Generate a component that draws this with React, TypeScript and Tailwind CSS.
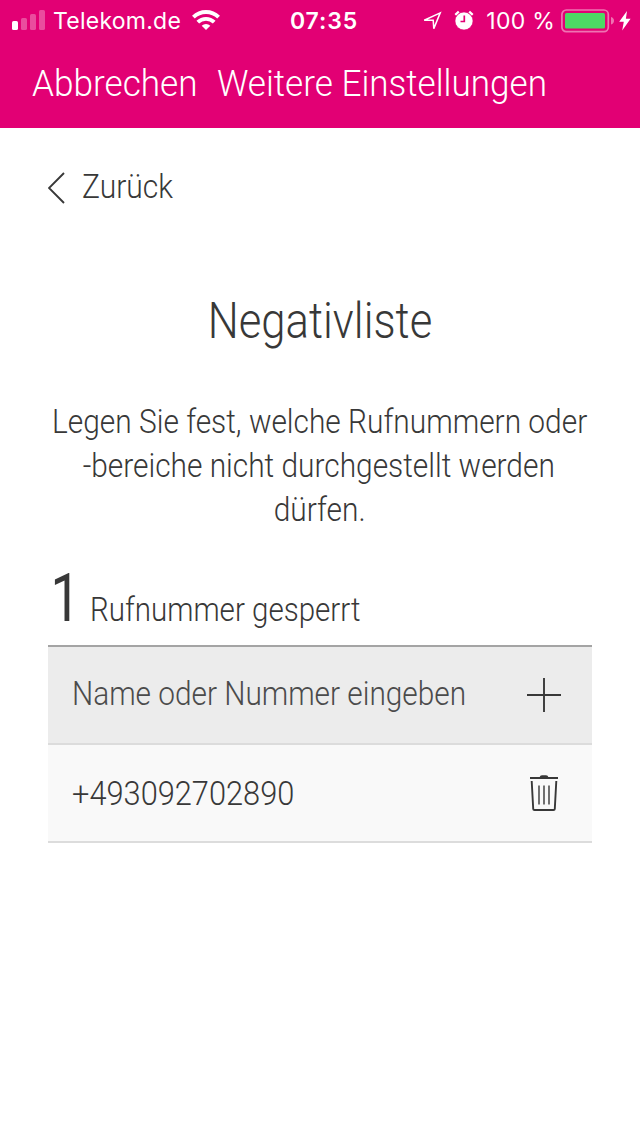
function SignalIcon() {
  return (
    <svg className="mb-0.5 h-5 w-[33px]" viewBox="0 0 33 20" fill="#fff">
      <rect x="0" y="11" width="6" height="9" rx="1.6" />
      <g opacity="0.3">
        <rect x="9" y="8" width="6" height="12" rx="1.6" />
        <rect x="18" y="4" width="6" height="16" rx="1.6" />
        <rect x="27" y="0" width="6" height="20" rx="1.6" />
      </g>
    </svg>
  );
}

function WifiIcon() {
  return (
    <svg className="mb-0.5 h-5 w-7" viewBox="0 0 28 20" fill="none" stroke="#fff" strokeWidth="3.9">
      <path d="M1.4 7.2a18 18 0 0 1 25.2 0" />
      <path d="M5.8 12.2a11.8 11.8 0 0 1 16.4 0" />
      <path d="M14 20l-4.3-4.3a6 6 0 0 1 8.6 0z" fill="#fff" stroke="none" />
    </svg>
  );
}

function LocationIcon() {
  return (
    <svg className="h-5 w-5" viewBox="0 0 20 20" fill="none" stroke="#fff" strokeWidth="1.5">
      <path d="M2.2 9.2L18.2 1.9 11.8 17.6 11.2 9.2z" />
    </svg>
  );
}

function AlarmIcon() {
  return (
    <svg className="mb-0.5 h-5 w-5" viewBox="0 0 20 20">
      <path d="M1.3 4.8L4.8 1.7M18.7 4.8L15.2 1.7" stroke="#fff" strokeWidth="2.4" fill="none" />
      <circle cx="10" cy="11" r="9" fill="#fff" stroke="#e20074" strokeWidth="0.6" />
      <path d="M10.3 5.5v6H6.5" stroke="#e20074" strokeWidth="1.7" fill="none" />
    </svg>
  );
}

function BatteryIcon() {
  return (
    <svg className="h-6 w-[54px]" viewBox="0 0 54 24">
      <rect x="0.9" y="1" width="46.4" height="21.6" rx="4.4" fill="none" stroke="#fff" strokeOpacity="0.45" strokeWidth="1.7" />
      <rect x="4" y="4.1" width="40" height="15.4" rx="1.6" fill="#4cd964" />
      <path d="M50 8q3 1 3 3.8T50 15.6z" fill="#fff" opacity="0.45" />
    </svg>
  );
}

function BoltIcon() {
  return (
    <svg className="h-5 w-3" viewBox="0 0 12 20" fill="#fff">
      <path d="M8 0L0.2 10.8H4.8L3.2 19.6 11.6 7.8H6.9z" />
    </svg>
  );
}

function TrashIcon() {
  return (
    <svg className="h-[38px] w-[30px]" viewBox="0 0 30 38" fill="none">
      <path d="M1 4H29" stroke="#383838" strokeWidth="2" />
      <path d="M10.500 3.600Q11 1.200 13 1.200H17Q19 1.200 19.500 3.600z" fill="#383838" />
      <path d="M2.700 7L4.200 34.800Q4.300 36 5.500 36H24.500Q25.700 36 25.800 34.800L27.300 7" stroke="#383838" strokeWidth="1.900" />
      <path d="M10 11.500V30.500M15 11.500V30.500M20 11.500V30.500" stroke="#383838" strokeWidth="1.400" />
    </svg>
  );
}

export default function App() {
  return (
    <div className="h-[1136px] w-[640px] overflow-hidden bg-white font-['Roboto',sans-serif] font-light whitespace-nowrap text-[#383838]">
      <header className="h-32 bg-[#e20074] text-white">
        <div className="grid h-10 grid-cols-[1fr_auto_1fr] items-center pt-px pr-[9px] pl-3 font-['Inter',sans-serif] text-[23px] leading-10 font-normal tracking-[0.25px]">
          <div className="flex items-center">
            <SignalIcon />
            <span className="ml-[8px]">Telekom.de</span>
            <span className="ml-[11px]"><WifiIcon /></span>
          </div>
          <time className="pl-[5px] font-semibold tracking-[0.9px]">07:35</time>
          <div className="flex items-center justify-end">
            <span className="mr-[12px]"><LocationIcon /></span>
            <AlarmIcon />
            <span className="mr-[7px] ml-[12px]">100 %</span>
            <span className="-ml-px"><BatteryIcon /></span>
            <span className="ml-1"><BoltIcon /></span>
          </div>
        </div>
        <nav className="flex h-[87px] items-center pl-8 text-[37px] leading-none">
          <button className="w-[183px] origin-left scale-x-[0.95] text-left">Abbrechen</button>
          <span className="origin-left scale-x-[0.948] pl-[2px]">Weitere Einstellungen</span>
        </nav>
      </header>

      <main className="px-12 pt-9">
        <button className="flex h-11 items-center text-[33px] leading-none">
          <svg className="mt-1 mr-[17px] h-8 w-[17px]" viewBox="0 0 17 32" fill="none" stroke="#383838" strokeWidth="1.900">
            <path d="M16 1L1 16 16 31" />
          </svg>
          <span className="origin-left scale-x-[0.91]">Zurück</span>
        </button>

        <h1 className="mt-[82px] scale-x-[0.873] text-center text-[50px] leading-[62px] font-light">Negativliste</h1>

        <div className="mt-12 flex flex-col items-center text-[33px] leading-[44px]">
          <p className="flex scale-x-[0.905] flex-col items-center">
            <span>Legen Sie fest, welche Rufnummern oder</span>
            <span className="-ml-0.5">-bereiche nicht durchgestellt werden</span>
            <span>dürfen.</span>
          </p>
        </div>

        <div className="mt-[21px] flex h-[92px] items-baseline gap-3">
          <span className="w-[30px] origin-left scale-x-[0.8] pl-[3px] text-[66px] leading-[92px] font-normal">1</span>
          <span className="origin-left scale-x-[0.895] text-[33px]">Rufnummer gesperrt</span>
        </div>

        <div className="flex h-[100px] items-center justify-between border-t-2 border-b-2 border-t-[#a4a4a4] border-b-[#dcdcdc] bg-[#ececec] pr-[30px] pl-6">
          <span className="w-[430px] origin-left scale-x-[0.903] pb-0.5 text-[33px] text-[#4b4b4b]">Name oder Nummer eingeben</span>
          <svg className="h-9 w-9 shrink-0" viewBox="0 0 36 36" stroke="#383838" strokeWidth="1.900">
            <path d="M1 18H35M18 1V35" />
          </svg>
        </div>
        <div className="flex h-[98px] items-center justify-between border-b-2 border-[#dcdcdc] bg-[#f9f9f9] pr-[33px] pl-6">
          <span className="origin-left scale-x-[0.933] pt-0.5 text-[33px]">+493092702890</span>
          <TrashIcon />
        </div>
      </main>
    </div>
  );
}
